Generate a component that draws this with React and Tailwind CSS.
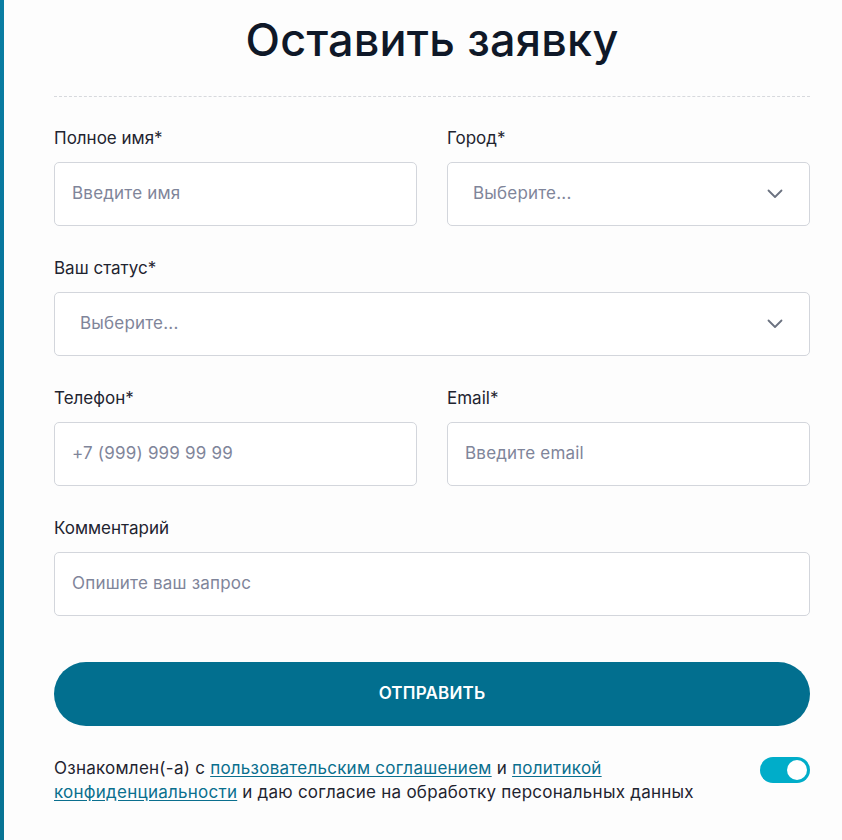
import React from "react";

function Chevron() {
  return (
    <svg width="16" height="10" viewBox="0 0 16 10" fill="none" className="shrink-0">
      <path d="M1.5 1.5 L8 8 L14.5 1.5" stroke="#6b7280" strokeWidth="1.8" strokeLinecap="round" strokeLinejoin="round" />
    </svg>
  );
}

function Field({ label, placeholder, select, pad = "pl-[17px]" }) {
  return (
    <div className="flex flex-col gap-3">
      <div className="text-[17px] leading-6 text-[#1f2430]">{label}</div>
      <div className={`h-16 rounded-[5px] border border-[#d3d6dc] bg-white flex items-center justify-between ${pad} pr-[26px]`}>
        <span className="text-[17px] tracking-[0.2px] text-[#7f859a]">{placeholder}</span>
        {select && <Chevron />}
      </div>
    </div>
  );
}

export default function App() {
  return (
    <div className="min-h-[840px] flex bg-[#fdfdfd]" style={{ fontFamily: "Inter, 'Noto Sans', sans-serif" }}>
      <div className="w-[4px] shrink-0 bg-gradient-to-b from-[#0a7ea3] via-[#07729a] to-[#077494]" />
      <div className="flex-1 pl-[50px] pr-[32px]">
        <h1 className="text-center text-[45px] leading-[80px] font-medium text-[#0f1828] tracking-[0.2px]">Оставить заявку</h1>
        <div className="mt-[16px] border-t border-dashed border-[#d7d9dd]" />
        <div className="mt-[29px] flex flex-col gap-[30px]">
          <div className="grid grid-cols-2 gap-x-[30px]">
            <Field label="Полное имя*" placeholder="Введите имя" />
            <Field label="Город*" placeholder="Выберите..." select pad="pl-[25px]" />
          </div>
          <Field label="Ваш статус*" placeholder="Выберите..." select pad="pl-[25px]" />
          <div className="grid grid-cols-2 gap-x-[30px]">
            <Field label="Телефон*" placeholder="+7 (999) 999 99 99" />
            <Field label="Email*" placeholder="Введите email" />
          </div>
          <Field label="Комментарий" placeholder="Опишите ваш запрос" />
        </div>
        <button className="mt-[46px] w-full h-16 rounded-full bg-[#026f8f] text-white text-[17px] font-semibold tracking-[0.2px]">
          ОТПРАВИТЬ
        </button>
        <div className="mt-[30px] flex items-start justify-between gap-6">
          <p className="text-[17px] leading-6 tracking-[0.25px] text-[#1f2430] max-w-[680px]">
            Ознакомлен(-а) с{" "}
            <a className="text-[#0a6f8e] underline underline-offset-2">пользовательским соглашением</a> и{" "}
            <a className="text-[#0a6f8e] underline underline-offset-2">политикой</a>
            <br />
            <a className="text-[#0a6f8e] underline underline-offset-2">конфиденциальности</a> и даю согласие на обработку персональных данных
          </p>
          <div className="mt-[1px] w-[50px] h-[26px] shrink-0 rounded-full bg-[#00adc9] flex items-center justify-end pr-[3px]">
            <div className="w-[20px] h-[20px] rounded-full bg-white" />
          </div>
        </div>
      </div>
    </div>
  );
}
